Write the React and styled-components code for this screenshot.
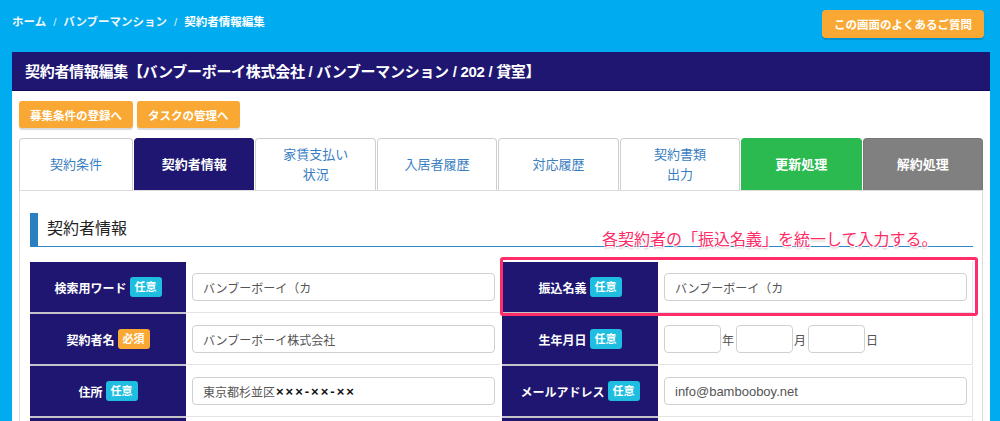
import React from "react";
import styled, { createGlobalStyle, css } from "styled-components";

const NAVY = "#1e1670";
const ORANGE = "#f9a833";
const CYAN = "#1fbde0";

const Global = createGlobalStyle`
  html, body { margin: 0; padding: 0; overflow: hidden; }
  body {
    background: #00abf0;
    font-family: "Liberation Sans", "Noto Sans CJK JP", sans-serif;
    -webkit-font-smoothing: antialiased;
  }
  * { box-sizing: border-box; }
`;

const Page = styled.div`
  padding: 0 10px 0 12px;
`;

const TopBar = styled.div`
  height: 52px;
  display: flex;
  justify-content: space-between;
  align-items: flex-start;
  padding: 10px 6px 0 0;
`;

const Breadcrumb = styled.nav`
  display: flex;
  gap: 7px;
  line-height: 25px;
  font-size: 11.5px;
  font-weight: bold;
  color: #eef4f8;
`;

const Crumb = styled.span`
  color: ${(p) => (p.$current ? "#ffffff" : "#eef4f8")};
`;

const Sep = styled.span`
  color: #d8eefb;
  font-weight: normal;
`;

const OrangeButton = styled.button`
  height: ${(p) => (p.$tall ? "28px" : "27px")};
  padding: 0 ${(p) => (p.$tall ? "12px" : "11px")};
  background: ${ORANGE};
  color: #fff;
  border: none;
  border-radius: ${(p) => (p.$tall ? "4px" : "3px")};
  box-shadow: 0 2px 1px rgba(0, 0, 0, 0.15);
  font-family: inherit;
  font-size: 11.5px;
  font-weight: bold;
`;

const Panel = styled.section`
  background: #fff;
  height: 400px;
`;

const PanelHeader = styled.h1`
  margin: 0;
  height: 39px;
  background: ${NAVY};
  color: #fff;
  font-size: 15px;
  letter-spacing: -0.3px;
  font-weight: bold;
  line-height: 39px;
  padding-left: 13px;
  border-bottom: 1px solid #100a5a;
`;

const PanelBody = styled.div`
  padding: 10px 7px 0 7px;
`;

const ButtonRow = styled.div`
  display: flex;
  gap: 4px;
`;

const Tabs = styled.div`
  display: flex;
  gap: 1px;
  margin-top: 10px;
  height: 52px;
`;

const tabVariants = {
  normal: css`
    background: #fff;
    color: #3a7ec2;
    border-color: #cfcfcf;
  `,
  active: css`
    background: ${NAVY};
    color: #fff;
    font-weight: bold;
    border-color: ${NAVY};
  `,
  green: css`
    background: #2aba4f;
    color: #fff;
    font-weight: bold;
    border-color: #2aba4f;
  `,
  gray: css`
    background: #808080;
    color: #fff;
    font-weight: bold;
    border-color: #777;
  `,
};

const Tab = styled.div`
  flex: ${(p) => (p.$narrow ? "0 0 114px" : "1 1 0")};
  display: flex;
  align-items: center;
  justify-content: center;
  text-align: center;
  font-size: 13px;
  line-height: 20px;
  border: 1px solid;
  border-bottom: none;
  border-radius: 4px 4px 0 0;
  ${(p) => tabVariants[p.$variant || "normal"]}
`;

const TabPanel = styled.div`
  border: 1px solid #dcdcdc;
  border-bottom: none;
  padding: 22px 9px 0 10px;
  height: 240px;
`;

const SectionTitle = styled.h2`
  position: relative;
  margin: 0;
  height: 34px;
  border-left: 8px solid #2a7fc1;
  border-bottom: 1px solid #2e88cc;
  padding-left: 9px;
  font-size: 16px;
  font-weight: normal;
  color: #222;
  line-height: 32px;
`;

const Annotation = styled.span`
  position: absolute;
  left: 564px;
  top: 17px;
  font-size: 16px;
  line-height: 20px;
  color: #ff2a68;
  white-space: nowrap;
  text-shadow: 1px 1px 0 #fff, -1px -1px 0 #fff, 1px -1px 0 #fff,
    -1px 1px 0 #fff, 0 2px 2px rgba(0, 0, 0, 0.25);
`;

const Table = styled.div`
  position: relative;
  margin-top: 15px;
  display: grid;
  grid-template-columns: 156px 314px 158px 1fr;
  grid-auto-rows: 52px;
`;

const LabelCell = styled.div`
  background: ${NAVY};
  margin-left: ${(p) => (p.$right ? "2px" : "0")};
  border-bottom: 2px solid #c4c4c8;
  display: flex;
  align-items: center;
  justify-content: center;
  gap: 3px;
  color: #fff;
  font-size: 12px;
  font-weight: bold;
`;

const Badge = styled.span`
  display: inline-block;
  padding: 0 5px;
  height: 20px;
  line-height: 20px;
  border-radius: 3px;
  font-size: 11px;
  font-weight: bold;
  color: #fff;
  background: ${(p) => (p.$required ? ORANGE : CYAN)};
`;

const ValueCell = styled.div`
  border-bottom: 1px solid #e4e4e4;
  border-right: ${(p) => (p.$last ? "1px solid #e4e4e4" : "none")};
  display: flex;
  align-items: center;
  padding: 0 5px 0 6px;
  margin-bottom: 1px;
  font-size: 12px;
  color: #555;
`;

const Input = styled.div`
  width: ${(p) => p.$w || "100%"};
  flex: none;
  height: 28px;
  border: 1px solid #d0d0d0;
  border-radius: 4px;
  padding: 0 10px;
  display: flex;
  align-items: center;
  font-size: ${(p) => (p.$latin ? "13px" : "12px")};
  color: #555;
  white-space: nowrap;
`;

const Unit = styled.span`
  margin: 0 2px 0 1px;
  font-size: 12px;
  color: #555;
`;

const Mask = styled.b`
  color: #111;
  font-size: 13px;
  letter-spacing: 2px;
  margin-left: 1px;
`;

const Highlight = styled.div`
  position: absolute;
  left: 470px;
  top: -5px;
  width: 478px;
  height: 59px;
  border: 3px solid #ff2d6a;
  border-radius: 3px;
  pointer-events: none;
`;

const tabs = [
  { label: ["契約条件"], narrow: true },
  { label: ["契約者情報"], variant: "active" },
  { label: ["家賃支払い", "状況"] },
  { label: ["入居者履歴"] },
  { label: ["対応履歴"] },
  { label: ["契約書類", "出力"] },
  { label: ["更新処理"], variant: "green" },
  { label: ["解約処理"], variant: "gray" },
];

function Label({ text, required, right }) {
  return (
    <LabelCell $right={right}>
      {text}
      {text && <Badge $required={required}>{required ? "必須" : "任意"}</Badge>}
    </LabelCell>
  );
}

export default function App() {
  return (
    <>
      <Global />
      <Page>
        <TopBar>
          <Breadcrumb>
            <Crumb>ホーム</Crumb>
            <Sep>/</Sep>
            <Crumb>バンブーマンション</Crumb>
            <Sep>/</Sep>
            <Crumb $current>契約者情報編集</Crumb>
          </Breadcrumb>
          <OrangeButton $tall>この画面のよくあるご質問</OrangeButton>
        </TopBar>
        <Panel>
          <PanelHeader>
            契約者情報編集【バンブーボーイ株式会社 / バンブーマンション / 202 / 貸室】
          </PanelHeader>
          <PanelBody>
            <ButtonRow>
              <OrangeButton>募集条件の登録へ</OrangeButton>
              <OrangeButton>タスクの管理へ</OrangeButton>
            </ButtonRow>
            <Tabs>
              {tabs.map((t, i) => (
                <Tab key={i} $narrow={t.narrow} $variant={t.variant}>
                  <span>
                    {t.label.map((l, j) => (
                      <React.Fragment key={j}>
                        {j > 0 && <br />}
                        {l}
                      </React.Fragment>
                    ))}
                  </span>
                </Tab>
              ))}
            </Tabs>
            <TabPanel>
              <SectionTitle>
                契約者情報
                <Annotation>各契約者の「振込名義」を統一して入力する。</Annotation>
              </SectionTitle>
              <Table>
                <Label text="検索用ワード" />
                <ValueCell>
                  <Input>バンブーボーイ（カ</Input>
                </ValueCell>
                <Label text="振込名義" right />
                <ValueCell $last>
                  <Input>バンブーボーイ（カ</Input>
                </ValueCell>

                <Label text="契約者名" required />
                <ValueCell>
                  <Input>バンブーボーイ株式会社</Input>
                </ValueCell>
                <Label text="生年月日" right />
                <ValueCell $last>
                  <Input $w="57px" />
                  <Unit>年</Unit>
                  <Input $w="57px" />
                  <Unit>月</Unit>
                  <Input $w="57px" />
                  <Unit>日</Unit>
                </ValueCell>

                <Label text="住所" />
                <ValueCell>
                  <Input>
                    東京都杉並区<Mask>×××-××-××</Mask>
                  </Input>
                </ValueCell>
                <Label text="メールアドレス" right />
                <ValueCell $last>
                  <Input $latin>info@bambooboy.net</Input>
                </ValueCell>

                <Label />
                <ValueCell />
                <Label right />
                <ValueCell $last />
                <Highlight />
              </Table>
            </TabPanel>
          </PanelBody>
        </Panel>
      </Page>
    </>
  );
}
